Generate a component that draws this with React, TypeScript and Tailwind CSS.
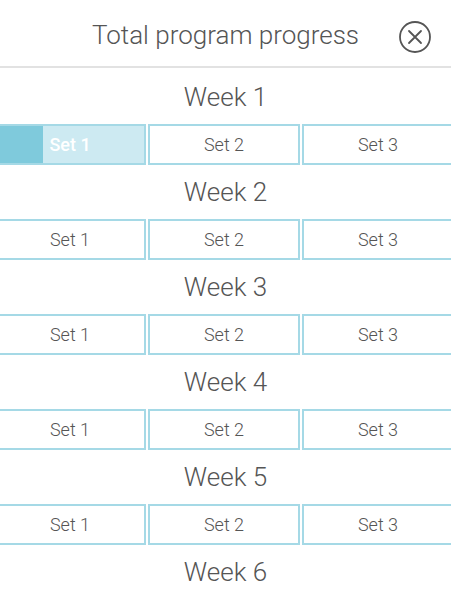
const weeks = [1, 2, 3, 4, 5, 6];
const sets = [1, 2, 3];

function CloseIcon() {
    return (
        <svg width="34" height="34" viewBox="0 0 34 34" fill="none" aria-hidden="true">
            <circle cx="17" cy="17" r="15" stroke="#555" strokeWidth="1.8" />
            <path d="M11 11L23 23M23 11L11 23" stroke="#555" strokeWidth="1.8" strokeLinecap="round" />
        </svg>
    );
}

function SetCell({ label, progress }: { label: string; progress?: number }) {
    const active = progress !== undefined;
    return (
        <div
            className={[
                'relative flex h-[41px] w-[152px] shrink-0 items-center justify-center overflow-hidden border-2 border-[#a5d9e6]',
                active ? 'bg-[#cdeaf2]' : 'bg-white',
            ].join(' ')}
        >
            {/* progress fill */}
            {active && <div className="absolute inset-y-0 left-0 bg-[#7fcadc]" style={{ width: progress }} />}
            <span
                className={[
                    'relative text-[18px]',
                    active ? 'font-medium text-white' : 'font-light text-[#555]',
                ].join(' ')}
            >
                {label}
            </span>
        </div>
    );
}

export default function App() {
    return (
        <div className="h-[591px] w-[451px] overflow-hidden bg-white font-['Roboto','Liberation_Sans',sans-serif]">
            {/* header */}
            <div className="relative flex h-[68px] items-center justify-center border-b-2 border-[#e2e2e2]">
                <h1 className="pt-[5px] text-[26px] font-light text-[#555]">Total program progress</h1>
                <button className="absolute right-[19px] top-[20px]" aria-label="close">
                    <CloseIcon />
                </button>
            </div>

            <div className="flex flex-col pt-[2px]">
                {weeks.map((w) => (
                    <section key={w} className="flex flex-col">
                        <div className="flex h-[54px] items-center justify-center pt-[1px] text-[26px] font-light text-[#555]">
                            Week {w}
                        </div>
                        {/* last week's sets fall below the fold */}
                        {w < weeks.length && (
                            <div className="ml-[-6px] flex w-[460px] gap-[2px]">
                                {sets.map((s) => (
                                    <SetCell key={s} label={`Set ${s}`} progress={w === 1 && s === 1 ? 47 : undefined} />
                                ))}
                            </div>
                        )}
                    </section>
                ))}
            </div>
        </div>
    );
}
